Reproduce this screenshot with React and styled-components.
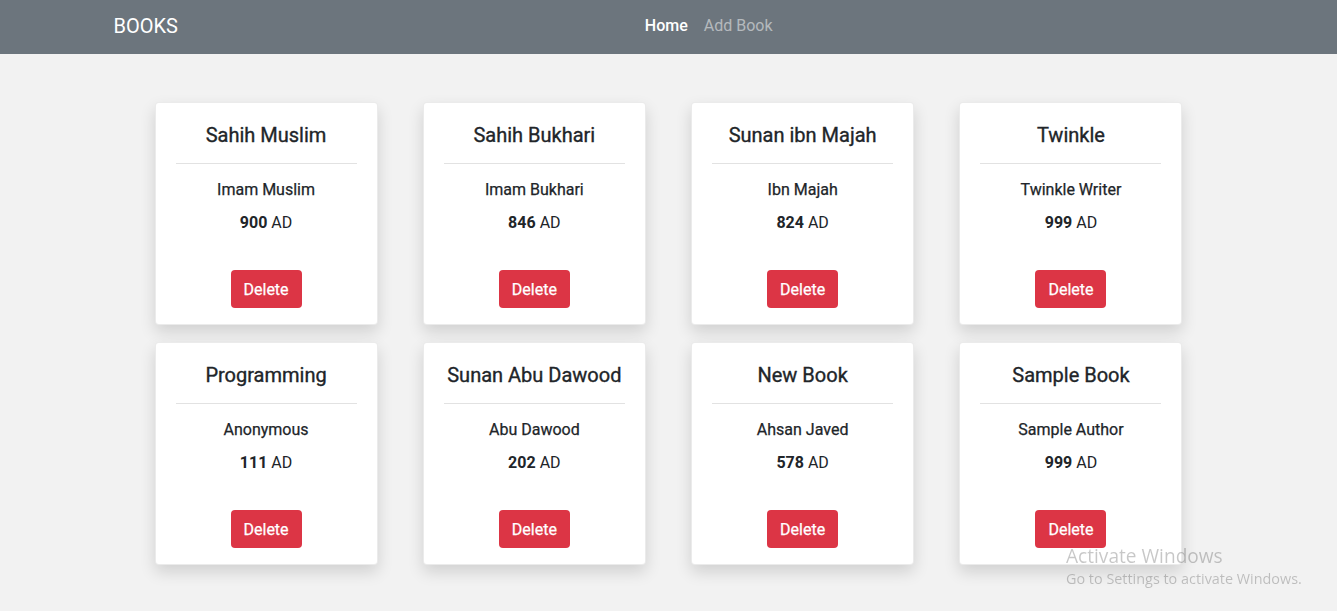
import React from 'react';
import styled, { createGlobalStyle } from 'styled-components';

const GlobalStyle = createGlobalStyle`
  body {
    margin: 0;
    background: #f2f2f2;
    font-family: Roboto, "Liberation Sans", sans-serif;
    color: #212529;
  }
`

const NavBar = styled.nav`
  height: 54px;
  background: #6c757d;
`

const NavContainer = styled.div`
  width: 1140px;
  margin: 0 auto;
  padding: 0 15px;
  box-sizing: border-box;
  height: 100%;
  display: flex;
  align-items: center;
`

const Brand = styled.span`
  font-size: 20px;
  color: #fff;
  margin-right: 16px;
  margin-top: -3px;
`

const NavLinks = styled.div`
  flex: 1;
  display: flex;
  justify-content: center;
  margin-top: -4px;
`

const NavLink = styled.a`
  font-size: 16px;
  padding: 0 8px;
  font-weight: ${({ active }) => active ? 500 : 400};
  color: ${({ active }) => active ? '#fff' : 'rgba(255, 255, 255, 0.5)'};
  text-decoration: none;
`

const Grid = styled.div`
  display: grid;
  grid-template-columns: repeat(4, 223px);
  column-gap: 45.3px;
  row-gap: 17px;
  justify-content: center;
  padding: 48px 0 40px;
`

const Card = styled.div`
  height: 223px;
  box-sizing: border-box;
  background: #fff;
  border: 1px solid rgba(0, 0, 0, 0.08);
  border-radius: 4px;
  box-shadow: 0 7px 16px rgba(0, 0, 0, 0.14);
  padding: 20px 20px 16px;
  display: flex;
  flex-direction: column;
  align-items: center;
  text-align: center;
`

const Title = styled.h5`
  margin: 0;
  font-size: 20px;
  font-weight: 400;
  line-height: 24px;
  white-space: nowrap;
  -webkit-text-stroke: 0.35px #212529;
`

const Divider = styled.hr`
  width: 100%;
  margin: 16px 0 14px;
  border: 0;
  border-top: 1px solid #e2e2e2;
`

const Author = styled.div`
  font-size: 16px;
  font-weight: 400;
  line-height: 24px;
  margin-bottom: 9px;
  -webkit-text-stroke: 0.25px #212529;
`

const Year = styled.div`
  font-size: 16px;
  line-height: 24px;
  & > b {
    font-weight: 700;
  }
`

const DeleteButton = styled.button`
  margin-top: auto;
  height: 38px;
  padding: 0 13px;
  background: #dc3545;
  color: #fff;
  border: 0;
  border-radius: 4px;
  font-family: inherit;
  font-size: 16px;
  font-weight: 400;
  -webkit-text-stroke: 0.25px #fff;
  cursor: pointer;
`

const Watermark = styled.div`
  position: fixed;
  left: 1066px;
  top: 543px;
  color: rgba(0, 0, 0, 0.22);
  font-family: "Open Sans", "Noto Sans", sans-serif;
  pointer-events: none;
`

const WatermarkTitle = styled.div`
  font-size: 19.1px;
  line-height: 26px;
`

const WatermarkText = styled.div`
  font-size: 14.4px;
  line-height: 20px;
`

const books = [
  { title: 'Sahih Muslim', author: 'Imam Muslim', year: 900 },
  { title: 'Sahih Bukhari', author: 'Imam Bukhari', year: 846 },
  { title: 'Sunan ibn Majah', author: 'Ibn Majah', year: 824 },
  { title: 'Twinkle', author: 'Twinkle Writer', year: 999 },
  { title: 'Programming', author: 'Anonymous', year: 111 },
  { title: 'Sunan Abu Dawood', author: 'Abu Dawood', year: 202 },
  { title: 'New Book', author: 'Ahsan Javed', year: 578 },
  { title: 'Sample Book', author: 'Sample Author', year: 999 },
]

const BookCard = ({ title, author, year }) => (
  <Card>
    <Title>{title}</Title>
    <Divider />
    <Author>{author}</Author>
    <Year><b>{year}</b> AD</Year>
    <DeleteButton>Delete</DeleteButton>
  </Card>
)

function App() {
  return (
    <div>
      <GlobalStyle />
      <NavBar>
        <NavContainer>
          <Brand>BOOKS</Brand>
          <NavLinks>
            <NavLink active href="#">Home</NavLink>
            <NavLink href="#">Add Book</NavLink>
          </NavLinks>
        </NavContainer>
      </NavBar>
      <Grid>
        {books.map((book, i) => <BookCard key={i} {...book} />)}
      </Grid>
      <Watermark>
        <WatermarkTitle>Activate Windows</WatermarkTitle>
        <WatermarkText>Go to Settings to activate Windows.</WatermarkText>
      </Watermark>
    </div>
  );
}

export default App;
